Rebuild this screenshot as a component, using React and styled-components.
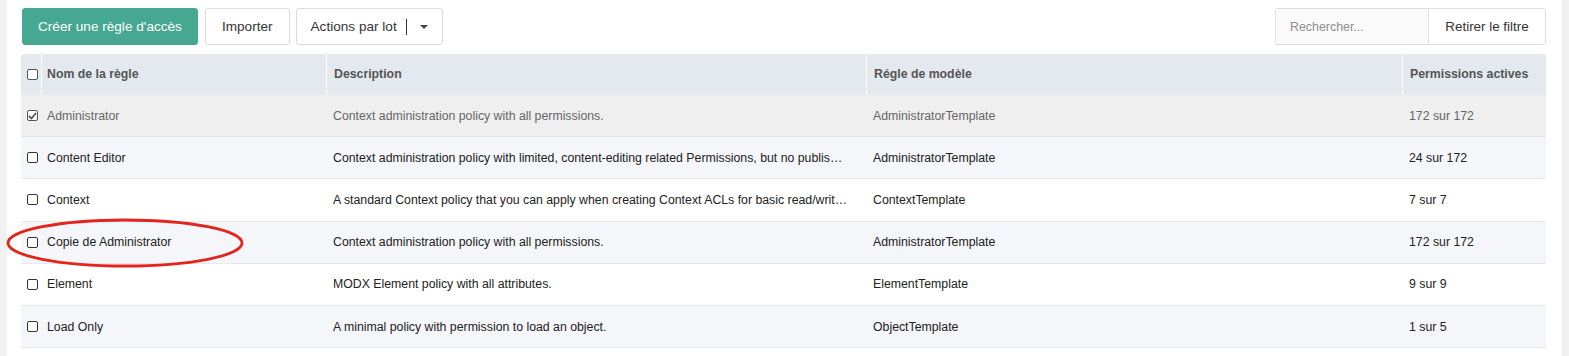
import styled, { createGlobalStyle } from "styled-components"

const GlobalStyle = createGlobalStyle`
  body {
    margin: 0;
    background: #f1f1f1;
    font-family: "Liberation Sans", Arial, sans-serif;
  }
`

const Page = styled.div`
  position: relative;
  margin: 0 7px;
  width: 1555px;
  height: 356px;
  background: #fff;
  padding: 8px 16px 0 14px;
  box-sizing: border-box;
`

const Toolbar = styled.div`
  display: flex;
  align-items: center;
  height: 37px;
  margin-left: 1px;
`

const Button = styled.button`
  height: 37px;
  padding: 0 ${(p) => p.$pad || 15}px;
  margin-right: ${(p) => p.$gap ?? 7}px;
  border: 1px solid ${(p) => (p.$primary ? "#46a891" : "#dcdcdc")};
  border-radius: 3px;
  background: ${(p) => (p.$primary ? "#46a891" : "#fff")};
  color: ${(p) => (p.$primary ? "#fff" : "#333")};
  font-family: "Liberation Sans", Arial, sans-serif;
  font-size: 13.6px;
  display: flex;
  align-items: center;
  gap: 8px;
`

const Divider = styled.span`
  width: 1px;
  height: 16px;
  background: #333;
  margin-left: 1px;
`

const Caret = styled.span`
  width: 0;
  height: 0;
  margin-left: 5px;
  border-left: 4px solid transparent;
  border-right: 4px solid transparent;
  border-top: 4px solid #444;
`

const Spacer = styled.div`
  flex: 1;
`

const SearchGroup = styled.div`
  display: flex;
  height: 37px;
  border: 1px solid #dedede;
  border-radius: 3px;
  overflow: hidden;
  box-sizing: border-box;
`

const Search = styled.div`
  width: 138px;
  padding-left: 14px;
  background: #fafafa;
  color: #8e8e8e;
  font-size: 12.4px;
  display: flex;
  align-items: center;
  border-right: 1px solid #dedede;
`

const ClearButton = styled.div`
  width: 116px;
  background: #fff;
  color: #333;
  font-size: 13.4px;
  display: flex;
  align-items: center;
  justify-content: center;
`

const Table = styled.div`
  margin-top: 9px;
  width: 1525px;
`

const Row = styled.div`
  display: grid;
  grid-template-columns: 20px 285px 540px 536px 144px;
  height: ${(p) => (p.$head ? 41 : 42.2)}px;
  align-items: stretch;
  background: ${(p) => p.$bg};
  border-radius: ${(p) => (p.$head ? "4px 4px 0 0" : 0)};
  border-bottom: 1px solid ${(p) => (p.$head ? "transparent" : "#e9e9e9")};
  box-sizing: border-box;
`

const Cell = styled.div`
  display: flex;
  align-items: center;
  padding-left: ${(p) => (p.$first ? 6 : 7)}px;
  font-size: 12.3px;
  color: ${(p) => p.$color};
  font-weight: ${(p) => (p.$head ? "bold" : "normal")};
  border-left: ${(p) => (p.$head && !p.$first ? "1px solid #fff" : "none")};
  white-space: nowrap;
  overflow: hidden;
`

const NameCell = styled(Cell)`
  padding-left: ${(p) => (p.$head ? 5 : 6)}px;
  border-left: ${(p) => (p.$head ? "1px solid #fff" : "none")};
`

const Box = styled.span`
  width: 11px;
  height: 11px;
  border: 1.3px solid ${(p) => p.$color || "#333"};
  border-radius: 2px;
  box-sizing: border-box;
  display: flex;
  align-items: center;
  justify-content: center;
  background: #fff;
`

const Ellipse = styled.svg`
  position: absolute;
  left: -7px;
  top: 218px;
  pointer-events: none;
`

const rows = [
  ["Administrator", "Context administration policy with all permissions.", "AdministratorTemplate", "172 sur 172"],
  ["Content Editor", "Context administration policy with limited, content-editing related Permissions, but no publis…", "AdministratorTemplate", "24 sur 172"],
  ["Context", "A standard Context policy that you can apply when creating Context ACLs for basic read/writ…", "ContextTemplate", "7 sur 7"],
  ["Copie de Administrator", "Context administration policy with all permissions.", "AdministratorTemplate", "172 sur 172"],
  ["Element", "MODX Element policy with all attributes.", "ElementTemplate", "9 sur 9"],
  ["Load Only", "A minimal policy with permission to load an object.", "ObjectTemplate", "1 sur 5"],
]

const Check = ({ checked, color }) => (
  <Box $color={color}>
    {checked && (
      <svg width="9" height="8" viewBox="0 0 9 8">
        <path d="M1 4 L3.5 6.5 L8 1" fill="none" stroke={color} strokeWidth="1.8" />
      </svg>
    )}
  </Box>
)

const App = () => {
  return (
    <>
      <GlobalStyle />
      <Page>
        <Toolbar>
          <Button $primary $pad={15}>Créer une règle d'accès</Button>
          <Button $pad={16} $gap={6}>Importer</Button>
          <Button $pad={14}>
            Actions par lot
            <Divider />
            <Caret />
          </Button>
          <Spacer />
          <SearchGroup>
            <Search>Rechercher...</Search>
            <ClearButton>Retirer le filtre</ClearButton>
          </SearchGroup>
        </Toolbar>
        <Table>
          <Row $head $bg="#e4e8ef">
            <Cell $head $first $color="#555">
              <Check color="#555" />
            </Cell>
            <NameCell $head $color="#555">Nom de la règle</NameCell>
            <Cell $head $color="#555">Description</Cell>
            <Cell $head $color="#555">Régle de modèle</Cell>
            <Cell $head $color="#555">Permissions actives</Cell>
          </Row>
          {rows.map((r, i) => {
            const selected = i === 0
            const bg = selected ? "#efefef" : i % 2 === 1 ? "#f5f6f9" : "#fff"
            const color = selected ? "#666" : "#222"
            return (
              <Row key={r[0]} $bg={bg}>
                <Cell $first $color={color}>
                  <Check checked={selected} color={selected ? "#555" : "#333"} />
                </Cell>
                <NameCell $color={color}>{r[0]}</NameCell>
                <Cell $color={color}>{r[1]}</Cell>
                <Cell $color={color}>{r[2]}</Cell>
                <Cell $color={color}>{r[3]}</Cell>
              </Row>
            )
          })}
        </Table>
        <Ellipse width="250" height="52" viewBox="0 0 250 52">
          <ellipse cx="125" cy="25" rx="117" ry="23" fill="none" stroke="#e3231c" strokeWidth="2.8" />
        </Ellipse>
      </Page>
    </>
  )
}

export default App
